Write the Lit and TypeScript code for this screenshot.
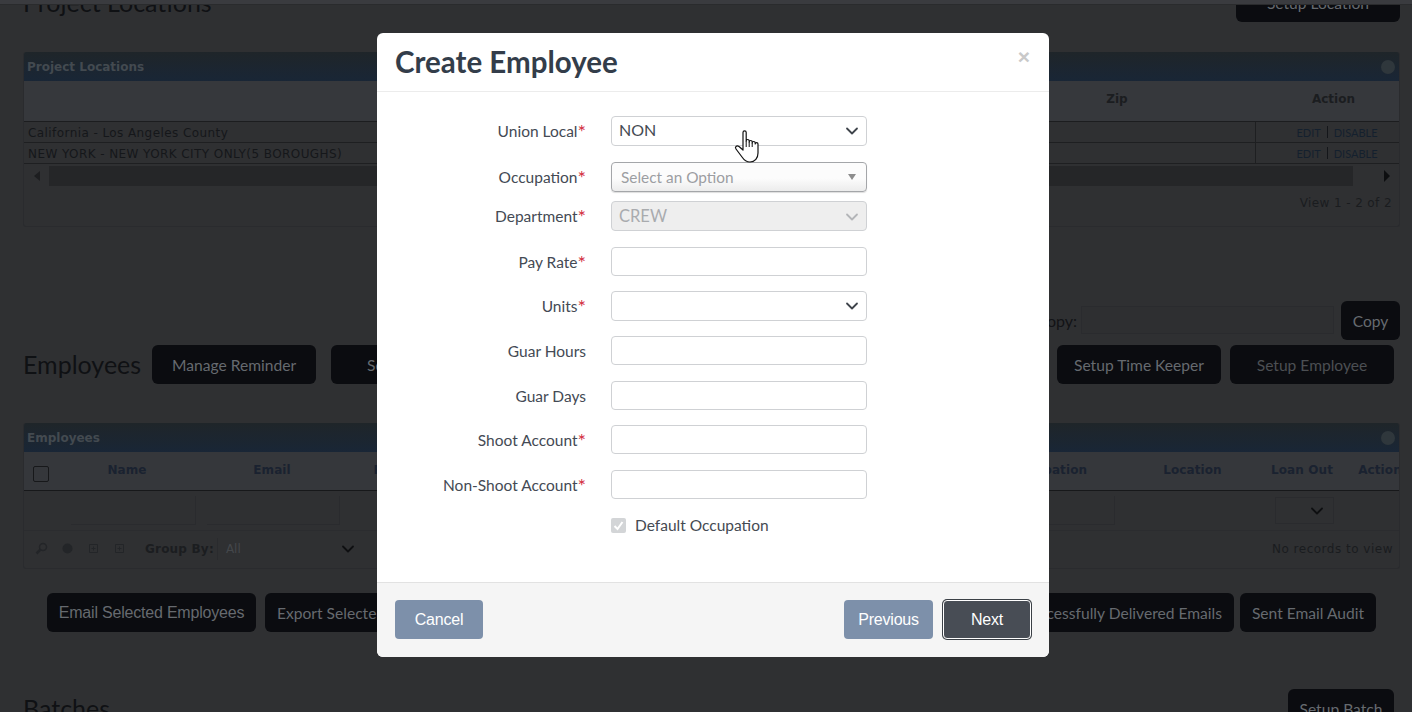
import { LitElement, html, css, svg } from "lit";
import { customElement } from "lit/decorators.js";

const chevron = svg`<path d="M2 2.5 L7 7.5 L12 2.5" fill="none" stroke="currentColor" stroke-width="1.8" stroke-linecap="round" stroke-linejoin="round"/>`;

type Row = { label: string; req: boolean; kind: string; value?: string; gap: string };
const rows: Row[] = [
  { label: "Union Local", req: true, kind: "select", value: "NON", gap: "g16" },
  { label: "Occupation", req: true, kind: "option", value: "Select an Option", gap: "g9" },
  { label: "Department", req: true, kind: "disabled", value: "CREW", gap: "g16" },
  { label: "Pay Rate", req: true, kind: "input", gap: "g15" },
  { label: "Units", req: true, kind: "select", value: "", gap: "g15" },
  { label: "Guar Hours", req: false, kind: "input", gap: "g16" },
  { label: "Guar Days", req: false, kind: "input", gap: "g15" },
  { label: "Shoot Account", req: true, kind: "input", gap: "g16" },
  { label: "Non-Shoot Account", req: true, kind: "input", gap: "g16" },
];

@customElement("app-root")
export class AppRoot extends LitElement {
  static styles = css`
    :host { display: block; position: relative; width: 1412px; height: 712px; overflow: hidden; background: #2f3032; font-family: Lato, "Liberation Sans", sans-serif; }
    .page { height: 712px; overflow: hidden; box-sizing: border-box; display: flex; flex-direction: column; padding-right: 12px; padding-left: 23px; }
    .topstrip { height: 5px; flex: none; margin: 0 -12px 0 -23px; background: #3a3b3f; border-bottom: 1px solid #2a2b2d; box-sizing: border-box; position: relative; z-index: 1; }
    .hrow { display: flex; align-items: center; }
    .sec1 { height: 39px; margin-top: -22px; margin-bottom: 30px; justify-content: space-between; flex: none; }
    h2 { margin: 0; font-size: 25px; font-weight: 400; color: #0f1114; line-height: 39px; }
    .btn { height: 39px; box-sizing: border-box; border-radius: 6px; background: #0b0c10; color: #666a6f; font-size: 15.6px; display: flex; align-items: center; justify-content: center; flex: none; white-space: nowrap; }
    .w164 { width: 164px; }
    .panel { border: 1px solid #2a2b2e; border-top: 0; border-radius: 3px; overflow: hidden; flex: none; font-family: "DejaVu Sans", sans-serif; }
    .pt { height: 29px; display: flex; align-items: center; justify-content: space-between; padding: 0 5px 0 4px; background: linear-gradient(#1f2529, #192636); font-size: 12px; font-weight: 700; color: #434a50; margin: 0 -1px; }
    .dot { width: 14px; height: 14px; border-radius: 50%; background: #2f373c; }
    .p1 { height: 174px; }
    .th1 { height: 41px; box-sizing: border-box; display: grid; grid-template-columns: 1231px 145px; background: #36383c; border-bottom: 1px solid #1c1d1f; font-size: 12px; font-weight: 700; color: #1b1d20; }
    .th1 span { text-align: center; padding-top: 11px; position: relative; }
    .zip { padding-left: 955px; padding-right: 0; }
    .tr1 { height: 21px; box-sizing: border-box; display: grid; grid-template-columns: 1231px 145px; border-bottom: 1px solid #1e1f21; font-size: 12px; letter-spacing: 0.42px; color: #15171a; align-items: center; }
    .tr1 > span:first-child { padding: 2px 0 0 4px; white-space: nowrap; }
    .act { border-left: 1px solid #1e1f21; height: 100%; font-family: Lato, sans-serif; font-size: 11px; color: #14202e; display: flex; align-items: center; justify-content: center; gap: 6px; padding-left: 18px; letter-spacing: 0; box-sizing: border-box; }
    .act i { width: 1px; height: 12px; background: #14161a; }
    .thhead { padding-left: 12px; }
    .scroll { height: 24px; display: flex; align-items: center; color: #1a1b1e; }
    .arrow { width: 25px; flex: none; display: flex; justify-content: center; }
    .track { flex: 1; height: 20px; background: #252628; margin-right: 55px; }
    .tri-l { border: 5px solid transparent; border-right: 6px solid #1d1e20; border-left: 0; }
    .tri-r { border: 6px solid transparent; border-left: 6px solid #0d0e10; border-right: 0; margin-left: -24px; margin-right: 9px; }
    .viewr { text-align: right; font-size: 12px; letter-spacing: 0.4px; color: #1a1c1f; padding: 8px 7px 0 0; }
    .copyrow { justify-content: flex-end; height: 39px; margin-top: 74px; flex: none; gap: 7px; }
    .copyrow label { font-size: 16px; color: #121316; margin-right: -3px; }
    .field { border: 1px solid #2a2b2e; background: #2e2f31; box-sizing: border-box; }
    .copyinput { width: 253px; height: 28px; margin-bottom: 1px; }
    .w59 { width: 59px; }
    .emprow { height: 39px; margin-top: 5px; flex: none; padding-right: 6px; }
    .emprow h2 { margin-right: 2px; }
    .spacer { flex: 1; }
    .ml15 { margin-left: 15px; }
    .ml9 { margin-left: 9px; }
    .p2 { margin-top: 39px; height: 145px; }
    .th2 { display: grid; grid-template-columns: 35px 136px 154px 92px 540px 135px 153px 66px 90px; overflow: hidden; }
    .fl2 { display: grid; grid-template-columns: 37px 136px 144px 80px 560px 135px 153px 66px 78px; overflow: hidden; }
    .th2 { height: 39px; box-sizing: border-box; background: #35373b; border-bottom: 1px solid #17181a; font-size: 12px; font-weight: 700; color: #1a2230; letter-spacing: 0.1px; align-items: center; }
    .th2 span { text-align: center; white-space: nowrap; padding-bottom: 2px; }
    .cb { width: 14px; height: 14px; border: 1px solid #17181a; border-radius: 2px; margin: 5px 0 0 9px; }
    .fl2 { height: 40px; box-sizing: border-box; align-items: center; border-bottom: 1px solid #2b2c2f; }
    .fi { height: 29px; box-sizing: border-box; border: 0; border-bottom: 1px solid #2a2b2e; border-right: 1px solid #2a2b2e; margin: 0 1px 0 10px; }
    .fs { width: 59px; height: 27px; box-sizing: border-box; border: 1px solid #2a2b2e; margin-left: 6px; color: #0e0f11; display: flex; align-items: center; justify-content: flex-end; padding-right: 9px; }
    .pf { height: 36px; box-sizing: border-box; padding: 0 6px 1px 11px; display: flex; align-items: center; font-size: 12px; color: #1a1c1f; }
    .ic { width: 13px; height: 13px; margin-right: 13px; color: #232528; flex: none; }
    .gb { font-weight: 700; margin-left: 6px; letter-spacing: 0.2px; color: #1b1d20; }
    .gs { width: 145px; height: 22px; margin-left: 3px; border-left: 1px solid #2a2b2e; display: flex; align-items: center; justify-content: space-between; padding: 0 7px 0 8px; box-sizing: border-box; color: #44474b; font-size: 12px; }
    .gs svg { color: #0e0f11; }
    .nr { margin-left: auto; letter-spacing: 0.5px; }
    .bbar { height: 39px; margin-top: 24px; flex: none; padding-left: 24px; padding-right: 24px; }
    .ar { font-family: "Liberation Sans", sans-serif; font-size: 16px; letter-spacing: -0.2px; }
    .w209 { width: 209px; }
    .w136 { width: 136px; margin-left: 6px; }
    .w240 { width: 240px; justify-content: flex-end; padding-right: 12px; }
    .st { justify-content: flex-start; padding-left: 12px; }
    .st36 { justify-content: flex-start; padding-left: 36px; }
    .dim { color: #4c4f53; }
    .sec3 { margin-top: 57px; height: 39px; flex: none; padding-right: 6px; justify-content: space-between; }
    .w106 { width: 106px; }

    .modal { position: absolute; left: 377px; top: 33px; width: 672px; height: 624px; border-radius: 6px; background: #fff; display: flex; flex-direction: column; overflow: hidden; }
    .mh { height: 59px; box-sizing: border-box; border-bottom: 1px solid #ececec; padding: 0 18px; display: flex; align-items: flex-start; justify-content: space-between; flex: none; }
    .mh h1 { margin: 11px 0 0; font-size: 29.5px; line-height: 36px; font-weight: 700; color: #333d4a; white-space: nowrap; }
    .close { font-size: 21px; font-weight: 700; line-height: 20px; margin: 14px 1px 0 0; color: #c9c9c9; font-family: "Liberation Sans", sans-serif; }
    .mb { flex: 1; padding-top: 24px; }
    .row { display: flex; align-items: center; }
    .lab { width: 209px; text-align: right; font-size: 15.5px; line-height: 20px; color: #444a54; white-space: nowrap; }
    .lab b { color: #d32f3f; font-weight: 400; font-size: 20px; line-height: 0; vertical-align: -2px; }
    .ctl { width: 256px; height: 30px; margin-left: 25px; box-sizing: border-box; border: 1px solid #cfd1d4; border-radius: 4px; background: #fff; display: flex; align-items: center; justify-content: space-between; padding: 0 7px 3px 7px; font-size: 16px; color: #454a52; }
    .ctl.input { height: 29px; }
    .ctl svg { color: #3f444b; flex: none; margin-top: 3px; }
    .option { border-color: #a4a6a9; background: linear-gradient(#fcfcfc 55%, #ececec); color: #9c9ea2; font-size: 15.4px; padding: 0 10px 0 9px; box-shadow: 0 1px 1px #0002; }
    .option i { border: 4px solid transparent; border-top: 6px solid #8d8d8d; border-bottom: 0; }
    .disabled { background: #eeeeee; color: #a9abae; font-size: 16.5px; padding-bottom: 1px; }
    .disabled svg { color: #b3b5b8; }
    .g9 { margin-bottom: 9px; } .g15 { margin-bottom: 15px; } .g16 { margin-bottom: 16px; }
    .chk { margin-left: 234px; display: flex; align-items: center; gap: 9px; font-size: 15.5px; color: #454a52; height: 20px; }
    .chk i { width: 15px; height: 15px; border-radius: 2px; background: #d3d5d7; display: flex; align-items: center; justify-content: center; }
    .mf { height: 75px; flex: none; box-sizing: border-box; background: #f5f5f5; border-top: 1px solid #e2e2e2; padding: 17px 18px 0; display: flex; gap: 10px; font-family: "Liberation Sans", sans-serif; }
    .mb2 { height: 39px; box-sizing: border-box; border-radius: 4px; background: #7d90aa; color: #fff; font-size: 16px; display: flex; align-items: center; justify-content: center; letter-spacing: -0.2px; }
    .cancel { width: 88px; margin-right: auto; }
    .prev { width: 89px; }
    .next { width: 88px; background: #484d55; border: 1px solid #fff; box-shadow: 0 0 0 1px #3b4046; }
    .hand { position: absolute; left: 734px; top: 129px; width: 26px; height: 34px; }
  `;

  field(r: Row) {
    if (r.kind === "input") return html`<div class="ctl input"></div>`;
    if (r.kind === "option") return html`<div class="ctl option"><span>${r.value}</span><i></i></div>`;
    return html`<div class="ctl ${r.kind === "disabled" ? "disabled" : ""}"><span>${r.value}</span><svg width="14" height="10" viewBox="0 0 14 10">${chevron}</svg></div>`;
  }

  render() {
    return html`
      <div class="page">
        <div class="topstrip"></div>
        <div class="hrow sec1"><h2>Project Locations</h2><div class="btn w164">Setup Location</div></div>
        <div class="panel p1">
          <div class="pt"><span>Project Locations</span><i class="dot"></i></div>
          <div class="th1"><span class="zip">Zip</span><span class="thhead">Action</span></div>
          <div class="tr1"><span>California - Los Angeles County</span><span class="act">EDIT <i></i> DISABLE</span></div>
          <div class="tr1"><span>NEW YORK - NEW YORK CITY ONLY(5 BOROUGHS)</span><span class="act">EDIT <i></i> DISABLE</span></div>
          <div class="scroll"><div class="arrow"><i class="tri-l"></i></div><div class="track"></div><i class="tri-r"></i></div>
          <div class="viewr">View 1 - 2 of 2</div>
        </div>
        <div class="hrow copyrow"><label>Copy:</label><div class="field copyinput"></div><div class="btn w59">Copy</div></div>
        <div class="hrow emprow">
          <h2>Employees</h2>
          <div class="btn w164 ml9">Manage Reminder</div>
          <div class="btn w164 ml15 st36">Setup</div>
          <div class="spacer"></div>
          <div class="btn w164">Setup Time Keeper</div>
          <div class="btn w164 ml9 dim">Setup Employee</div>
        </div>
        <div class="panel p2">
          <div class="pt"><span>Employees</span><i class="dot"></i></div>
          <div class="th2"><i class="cb"></i><span>Name</span><span>Email</span><span>Phone</span><span></span><span>Occupation</span><span>Location</span><span>Loan Out</span><span>Action</span></div>
          <div class="fl2"><span></span><div class="fi"></div><div class="fi"></div><span></span><span></span><div class="fi"></div><span></span><div class="fs"><svg width="14" height="10" viewBox="0 0 14 10">${chevron}</svg></div><span></span></div>
          <div class="pf">
            <svg class="ic" viewBox="0 0 13 13"><circle cx="8" cy="5" r="3.5" fill="none" stroke="currentColor" stroke-width="1.5"/><path d="M5.5 7.5 L1.5 11.5" stroke="currentColor" stroke-width="2.5"/></svg>
            <svg class="ic" viewBox="0 0 13 13"><circle cx="6.5" cy="6.5" r="5" fill="currentColor"/></svg>
            <svg class="ic" viewBox="0 0 13 13"><path d="M2.5 2.5h8v8h-8z M4.5 6.5h4 M6.5 4.5v4" fill="none" stroke="currentColor"/></svg>
            <svg class="ic" viewBox="0 0 13 13"><path d="M2.5 2.5h8v8h-8z M4.5 6.5h4 M6.5 4.5v4" fill="none" stroke="currentColor"/></svg>
            <span class="gb">Group By:</span>
            <div class="gs"><span>All</span><svg width="14" height="10" viewBox="0 0 14 10">${chevron}</svg></div>
            <span class="nr">No records to view</span>
          </div>
        </div>
        <div class="hrow bbar">
          <div class="btn w209 ar">Email Selected Employees</div>
          <div class="btn w209 ml9 st">Export Selected</div>
          <div class="spacer"></div>
          <div class="btn w240">Successfully Delivered Emails</div>
          <div class="btn w136">Sent Email Audit</div>
        </div>
        <div class="hrow sec3"><h2>Batches</h2><div class="btn w106">Setup Batch</div></div>
      </div>

      <div class="modal">
        <div class="mh"><h1>Create Employee</h1><span class="close">×</span></div>
        <div class="mb">
          ${rows.map(r => html`<div class="row ${r.gap}"><div class="lab">${r.label}${r.req ? html`<b>*</b>` : ""}</div>${this.field(r)}</div>`)}
          <div class="chk"><i><svg width="11" height="11" viewBox="0 0 11 11"><path d="M1.5 6 L4.5 9 L9.5 2" fill="none" stroke="#fff" stroke-width="2"/></svg></i><span>Default Occupation</span></div>
        </div>
        <div class="mf">
          <div class="mb2 cancel">Cancel</div>
          <div class="mb2 prev">Previous</div>
          <div class="mb2 next">Next</div>
        </div>
      </div>
      <svg class="hand" viewBox="0 0 26 34">
        <path d="M9 15 V3.5 a1.6 1.6 0 0 1 3.2 0 V12 a1.5 1.5 0 0 1 3 0 V13 a1.5 1.5 0 0 1 3 0 V14 a1.5 1.5 0 0 1 3 0 V15 a1.4 1.4 0 0 1 2.8 0 V24 c0 5 -3 9 -8 9 c-4 0 -6 -2 -8 -5 L2 20 c-1.5 -2 0.5 -4 3 -2.5 L9 21 z" fill="#fff" stroke="#111" stroke-width="1.2" stroke-linejoin="round"/>
        <path d="M12.2 12 V18 M15.2 13 V18 M18.2 14 V18" fill="none" stroke="#111" stroke-width="1"/>
      </svg>
    `;
  }
}
